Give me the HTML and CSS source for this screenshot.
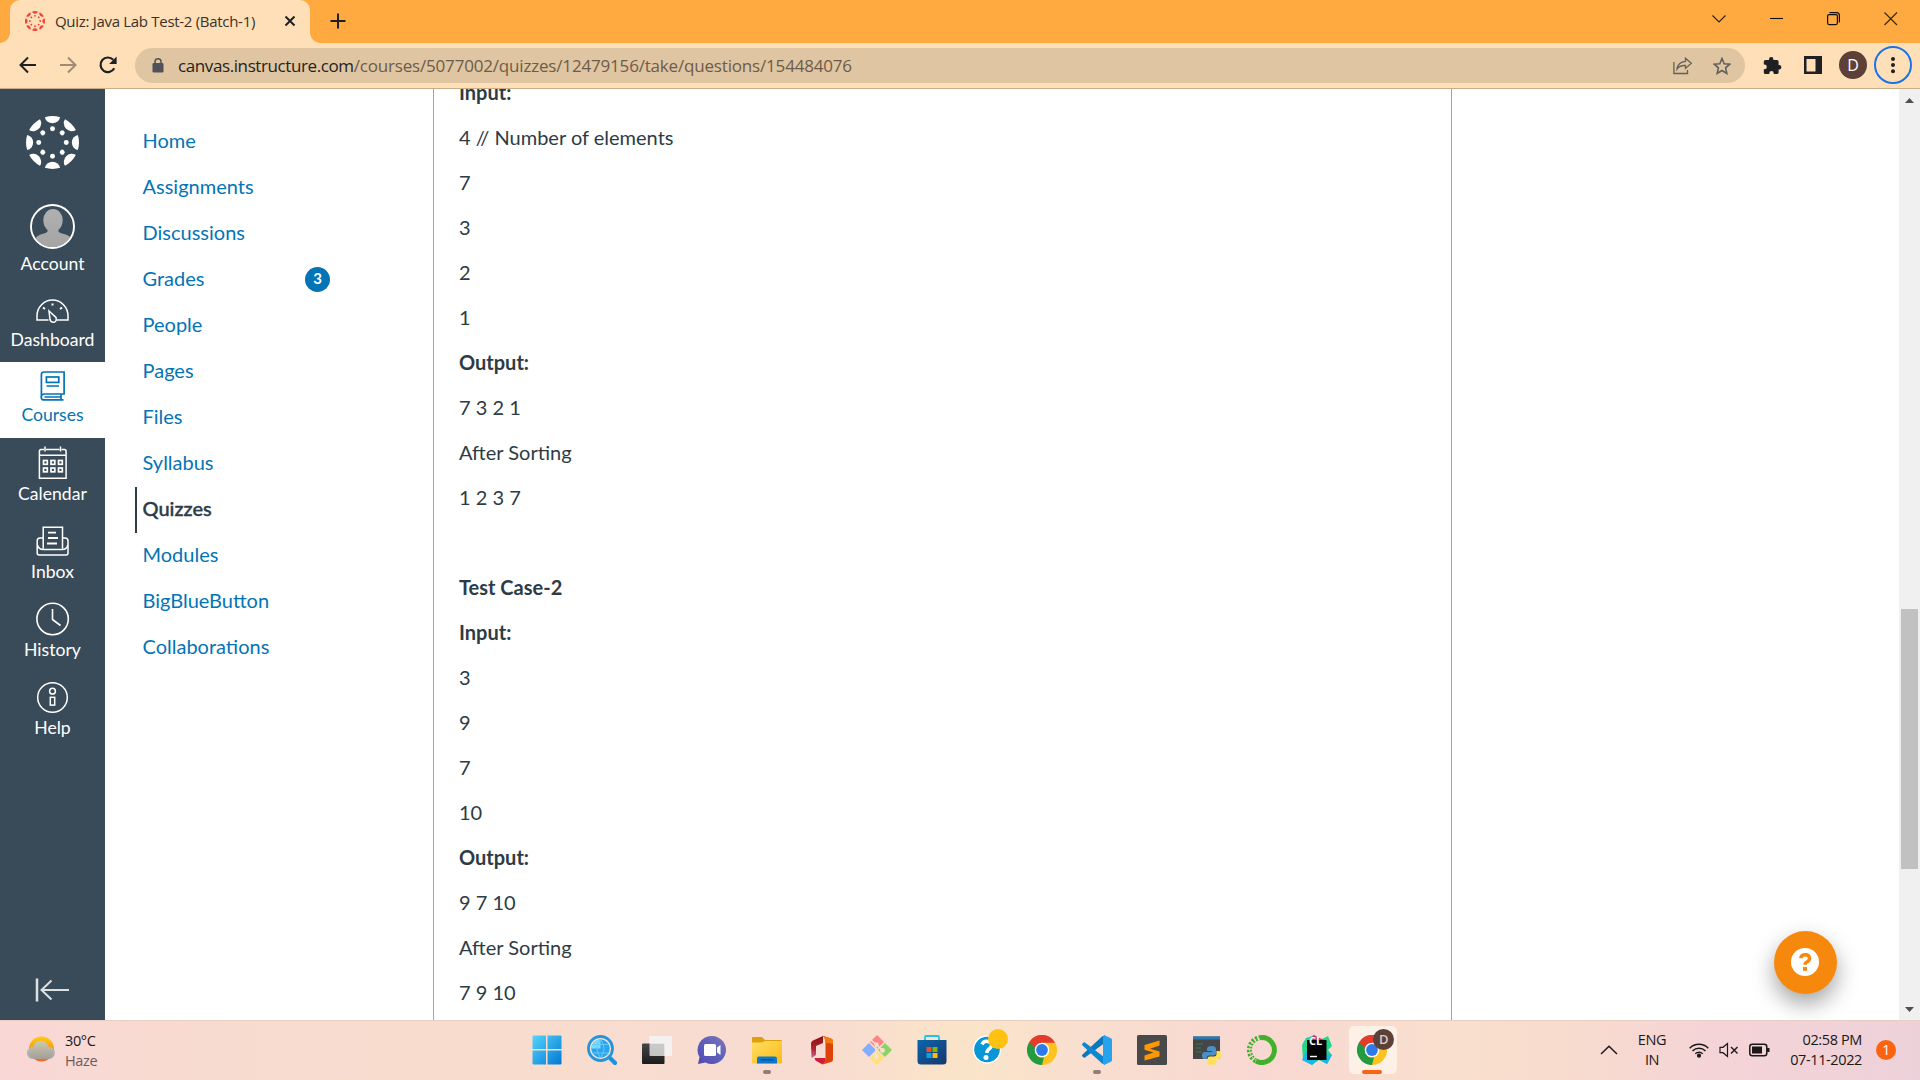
FILE: index.html
```html
<!DOCTYPE html>
<html lang="en">
<head>
<meta charset="utf-8">
<title>Quiz: Java Lab Test-2 (Batch-1)</title>
<link rel="stylesheet" href="styles.css">
</head>
<body>
<svg class="defs" width="0" height="0">
  <defs>
    <g id="petal"><path d="M57 3.500A80 80 0 0 1 103 3.500A23.300 21.500 0 0 1 57 3.500Z"/><circle cx="80" cy="38.500" r="7.500"/></g>
    <g id="canvas-logo">
      <use href="#petal"/><use href="#petal" transform="rotate(45 80 80)"/><use href="#petal" transform="rotate(90 80 80)"/><use href="#petal" transform="rotate(135 80 80)"/>
      <use href="#petal" transform="rotate(180 80 80)"/><use href="#petal" transform="rotate(225 80 80)"/><use href="#petal" transform="rotate(270 80 80)"/><use href="#petal" transform="rotate(315 80 80)"/>
    </g>
    <g id="chrome-logo">
      <path d="M15 15 2 7.500A15 15 0 0 1 28 7.500Z" fill="#e33b2e"/>
      <path d="M15 15 28 7.500A15 15 0 0 1 15 30Z" fill="#fcc31e"/>
      <path d="M15 15V30A15 15 0 0 1 2 7.500Z" fill="#249a41"/>
      <path d="M15 7.500H28L20 17Z" fill="#fcc31e"/>
      <path d="M2 7.500 8.500 18.700 15 14Z" fill="#249a41"/>
      <path d="M21.500 18.700 15 30 10 20Z" fill="#fcc31e"/>
      <path d="M8.500 18.800A7.500 7.500 0 0 0 17 22.300L15 30 8 28Z" fill="#249a41"/>
      <path d="M2 7.500Q8 0 15 0T28 7.500H15A7.500 7.500 0 0 0 7.900 12.900L3.500 9Z" fill="#e33b2e"/>
      <circle cx="15" cy="15" r="7.300" fill="#fff"/><circle cx="15" cy="15" r="5.900" fill="#2c7be9"/>
    </g>
    <linearGradient id="gWin" x1="0" y1="0" x2="1" y2="1"><stop offset="0" stop-color="#56d4fd"/><stop offset="1" stop-color="#0078d4"/></linearGradient>
    <linearGradient id="gTask" x1="0" y1="0" x2="0" y2="1"><stop offset="0" stop-color="#454545"/><stop offset="1" stop-color="#1c1c1c"/></linearGradient>
    <linearGradient id="gChat" x1="0" y1="1" x2="1" y2="0"><stop offset="0" stop-color="#4f4bb2"/><stop offset=".6" stop-color="#6264bb"/><stop offset="1" stop-color="#8676b2"/></linearGradient>
    <linearGradient id="gFolder" x1="0" y1="0" x2="1" y2="1"><stop offset="0" stop-color="#ffdf66"/><stop offset="1" stop-color="#fcb914"/></linearGradient>
    <linearGradient id="gStore" x1="0" y1="0" x2="1" y2="1"><stop offset="0" stop-color="#0a66ac"/><stop offset="1" stop-color="#18366c"/></linearGradient>
    <linearGradient id="gSun" x1="0" y1="0" x2="0" y2="1"><stop offset="0" stop-color="#ffcc0a"/><stop offset="1" stop-color="#f8631a"/></linearGradient>
    <linearGradient id="gCloud" x1="0" y1="0" x2="0" y2="1"><stop offset="0" stop-color="#c9ccc0"/><stop offset="1" stop-color="#9aa2a8"/></linearGradient>
    <linearGradient id="gAva" x1="0" y1="0" x2="0" y2="1"><stop offset="0" stop-color="#b0b0b0"/><stop offset="1" stop-color="#a4a4a4"/></linearGradient>
    <linearGradient id="gOff" x1="0" y1="0" x2="0" y2="1"><stop offset="0" stop-color="#8c0f14"/><stop offset=".6" stop-color="#b3242c"/><stop offset="1" stop-color="#c465a6"/></linearGradient>
  </defs>
</svg>
<div class="screen">
  <header class="tabstrip">
    <div class="tab">
      <svg class="favicon" viewBox="0 0 160 160" width="20" height="20" fill="#f2413a"><use href="#canvas-logo"/></svg>
      <span class="tab-title">Quiz: Java Lab Test-2 (Batch-1)</span>
      <svg class="tab-close" width="12" height="12" viewBox="0 0 12 12"><path d="M1.500 1.500 10.500 10.500M10.500 1.500 1.500 10.500" stroke="#1f2023" stroke-width="2"/></svg>
    </div>
    <svg class="newtab" width="16" height="16" viewBox="0 0 16 16"><path d="M8 .5V15.500M.5 8H15.500" stroke="#1f2023" stroke-width="2"/></svg>
    <div class="window-buttons">
      <svg width="58" height="36" viewBox="0 0 58 36" fill="none" stroke="#2a2013" stroke-width="1.100"><path d="M22.500 15.500 29 22 35.500 15.500"/></svg>
      <svg width="57" height="36" viewBox="0 0 57 36"><path d="M22 18.500H35" stroke="#111" stroke-width="1.100"/></svg>
      <svg width="57" height="36" viewBox="0 0 57 36" fill="none" stroke="#111" stroke-width="1.200"><rect x="22.600" y="14.600" width="9.800" height="10" rx="1.500"/><path d="M24.500 12.600H31.500Q34.400 12.600 34.400 15.500V22.500"/></svg>
      <svg width="58" height="36" viewBox="0 0 58 36"><path d="M22.500 12.500 35 25M35 12.500 22.500 25" stroke="#3a2a13" stroke-width="1.200"/></svg>
    </div>
  </header>
  <div class="toolbar">
    <div class="nav-buttons">
      <svg width="18" height="18" viewBox="0 0 18 18" fill="none" stroke="#1f2023" stroke-width="2"><path d="M17 9H2M9 1.500 1.500 9 9 16.500"/></svg>
      <svg width="18" height="18" viewBox="0 0 18 18" fill="none" stroke="#a08c74" stroke-width="2"><path d="M1 9H16M9 1.500 16.500 9 9 16.500"/></svg>
      <svg width="18" height="18" viewBox="0 0 18 18"><path d="M15.300 12.300A7.300 7.300 0 1 1 14.200 3.800" fill="none" stroke="#1f2023" stroke-width="2.200"/><path d="M17.600.5V8H10.100Z" fill="#1f2023"/></svg>
    </div>
    <div class="omnibox">
      <svg class="lock" width="12" height="15" viewBox="0 0 12 15"><rect x=".5" y="5" width="11" height="9.500" rx="1.300" fill="#505257"/><path d="M3 6V3.800A3 3 0 0 1 9 3.800V6" fill="none" stroke="#505257" stroke-width="1.500"/></svg>
      <span class="url"><span class="host">canvas.instructure.com</span>/courses/5077002/quizzes/12479156/take/questions/154484076</span>
      <svg class="share" width="20" height="18" viewBox="0 0 20 18" fill="none" stroke="#62605c" stroke-width="1.300"><path d="M.9 5V16.500H14.500V13"/><path d="M12.500 1.200 18.300 6.300 12.500 11.400V8.500C8.500 8.300 6 9.300 4 12 4.500 8 7.500 4.800 12.500 4.300Z"/></svg>
      <svg class="star" width="18" height="18" viewBox="0 0 18 18"><path d="M9 1.500 11.200 6.700 16.800 7.200 12.600 10.900 13.800 16.400 9 13.500 4.200 16.400 5.400 10.900 1.200 7.200 6.800 6.700Z" fill="none" stroke="#62605c" stroke-width="1.600"/></svg>
    </div>
    <div class="toolbar-actions">
      <svg class="puzzle" width="19" height="19" viewBox="0 0 19 19"><path d="M2.500 4H6V3.200A2.200 2.200 0 0 1 10.400 3.200V4H14A1.700 1.700 0 0 1 15.600 5.700V9H16.200A2.200 2.200 0 0 1 16.200 13.400H15.600V16.500A1.700 1.700 0 0 1 14 18.100H10.700V17.300A2.200 2.200 0 0 0 6.300 17.300V18.100H2.500A1.700 1.700 0 0 1 .8 16.500V13.200H1.500A2.300 2.300 0 0 0 1.500 8.600H.8V5.700A1.700 1.700 0 0 1 2.500 4Z" fill="#1f2023"/></svg>
      <svg class="panel" width="18" height="18" viewBox="0 0 18 18"><path fill-rule="evenodd" d="M0 0H18V18H0ZM2.500 3V15.500H11.500V3Z" fill="#1f2023"/></svg>
      <span class="profile">D</span>
      <span class="menu-ring"><svg width="6" height="18" viewBox="0 0 6 18" fill="#1f2023"><circle cx="3" cy="3" r="2"/><circle cx="3" cy="9" r="2"/><circle cx="3" cy="15.200" r="2"/></svg></span>
    </div>
  </div>

  <main class="page">
    <nav class="global-nav">
      <svg class="brand" viewBox="0 0 160 160" width="53" height="53" fill="#fff"><use href="#canvas-logo"/></svg>
      <a class="gitem account">
        <svg width="45" height="45" viewBox="0 0 45 45"><clipPath id="av"><circle cx="22.500" cy="22.500" r="20.500"/></clipPath><g clip-path="url(#av)" fill="url(#gAva)"><path d="M3 45V38Q5 31.500 14 29.500Q18.500 28.500 17.500 26Q13.300 22 13.300 16A9.700 11 0 0 1 32.700 16Q32.700 22 28.500 26Q27.500 28.500 32 29.500Q40 31 43 36V45Z"/></g><circle cx="22.500" cy="22.500" r="21.500" fill="none" stroke="#fff" stroke-width="1.900"/></svg>
        <span>Account</span></a>
      <a class="gitem dash">
        <svg width="35" height="36" viewBox="0.500 0 35 36" fill="none" stroke="#fff" stroke-width="1.500"><path d="M14 27H2.500V23A15.500 16 0 0 1 33.500 23V27H22"/><path d="M14.500 18 21.500 24.500Q22.500 28.500 19.500 29.200Q16.300 29.500 15.500 26.500Z"/><path d="M17 11.500H19M8.500 14.500 10.500 16M27.500 14.500 25.500 16" stroke-width="2"/></svg>
        <span>Dashboard</span></a>
      <a class="gitem active">
        <svg width="35" height="36" viewBox="0.500 0 35 36" fill="none" stroke="#0374b5" stroke-width="1.700"><path d="M6.900 29V6.500Q6.900 4 9.500 4H29.600V26H9.500Q6.500 26.500 6.700 29.300Q7 31.900 9.500 31.900H29"/><rect x="11.900" y="9" width="12.400" height="5.400"/><path d="M12 18H24.500M10 29H26M26.500 26V32"/></svg>
        <span>Courses</span></a>
      <a class="gitem low">
        <svg width="35" height="36" viewBox="0.500 0 35 36" fill="none" stroke="#fff" stroke-width="1.500"><path d="M9.500 4.500H6.500Q4.900 4.500 4.900 6.500V33.200H31.600V6.500Q31.600 4.500 30 4.500H27M11.500 4.500H25M5 10.300H31.500"/><path d="M10.500 1.500V6.500M26 1.500V6.500"/><g stroke-width="1.700"><rect x="9" y="15.500" width="3.800" height="3.800"/><rect x="16.500" y="15.500" width="3.800" height="3.800"/><rect x="24" y="15.500" width="3.800" height="3.800"/><rect x="9" y="23" width="3.800" height="3.800"/><rect x="16.500" y="23" width="3.800" height="3.800"/><rect x="24" y="23" width="3.800" height="3.800"/></g></svg>
        <span>Calendar</span></a>
      <a class="gitem low">
        <svg width="35" height="36" viewBox="0.500 0 35 36" fill="none" stroke="#fff" stroke-width="1.500"><path d="M8.500 15H5.500Q2.700 15 2.700 18V30Q2.700 32 4.700 32H31.500Q33.500 32 33.500 30V18Q33.500 15 30.500 15H28"/><path d="M8.700 25.500V4.200H28V25.500M3 22Q4 26.500 9 26.500H27.500Q32.500 26.500 33.300 22"/><path d="M13.500 9.700H21.500M13.500 15H23.500M12.500 20.500H22.500" stroke-width="1.800"/></svg>
        <span>Inbox</span></a>
      <a class="gitem low">
        <svg width="35" height="36" viewBox="0.500 0 35 36" fill="none" stroke="#fff" stroke-width="1.600"><circle cx="18.100" cy="18" r="15.700"/><path d="M18 8V18.500L26 24.500"/></svg>
        <span>History</span></a>
      <a class="gitem low">
        <svg width="35" height="36" viewBox="0.500 0 35 36" fill="none" stroke="#fff" stroke-width="1.500"><circle cx="18" cy="18.500" r="14.800"/><circle cx="18" cy="12.200" r="2.900"/><rect x="15.800" y="18.300" width="4.400" height="7.800"/></svg>
        <span>Help</span></a>
      <svg class="collapse" width="35" height="26" viewBox="0 0 35 26" fill="none" stroke="#dde1e4" stroke-width="2"><path d="M2 1.500V24.500" stroke-width="2.500"/><path d="M6 13H34M16.500 3.500 6.500 13 16.500 22.500"/></svg>
    </nav>
    <nav class="course-nav">
      <a>Home</a><a>Assignments</a><a>Discussions</a>
      <a>Grades<b class="count">3</b></a>
      <a>People</a><a>Pages</a><a>Files</a><a>Syllabus</a>
      <a class="current">Quizzes</a>
      <a>Modules</a><a>BigBlueButton</a><a>Collaborations</a>
    </nav>
    <section class="question">
      <p><strong>Input:</strong></p>
      <p>4 // Number of elements</p>
      <p>7</p><p>3</p><p>2</p><p>1</p>
      <p><strong>Output:</strong></p>
      <p>7 3 2 1</p>
      <p>After Sorting</p>
      <p>1 2 3 7</p>
      <p>&nbsp;</p>
      <p><strong>Test Case-2</strong></p>
      <p><strong>Input:</strong></p>
      <p>3</p><p>9</p><p>7</p><p>10</p>
      <p><strong>Output:</strong></p>
      <p>9 7 10</p>
      <p>After Sorting</p>
      <p>7 9 10</p>
    </section>
    <div class="scrollbar">
      <svg width="9" height="5" viewBox="0 0 9 5"><path d="M0 5 4.500 0 9 5Z" fill="#505050"/></svg>
      <div class="thumb"></div>
      <svg class="down" width="9" height="5" viewBox="0 0 9 5"><path d="M0 0H9L4.500 5Z" fill="#505050"/></svg>
    </div>
    <div class="help-fab"><svg width="28" height="28" viewBox="0 0 28 28"><circle cx="14" cy="14" r="14" fill="#fff"/><path d="M9.700 10.300Q10.300 6.700 14.300 6.700T18.600 10.300Q18.600 12.500 16.300 13.800Q14 15 14 16.800" fill="none" stroke="#f6890d" stroke-width="3.400"/><path d="M12 19H16V22.800H12Z" fill="#f6890d"/></svg></div>
  </main>

  <footer class="taskbar">
    <div class="weather">
      <svg width="30" height="28" viewBox="0 0 30 28"><circle cx="15.500" cy="14" r="12.500" fill="url(#gSun)"/><path d="M7 24A6 6 0 0 1 7 11.700A8 8 0 0 1 22.500 11.700A6 6 0 0 1 23 24Z" fill="url(#gCloud)" fill-opacity=".9"/></svg>
      <div class="wtext"><span>30°C</span><span class="muted">Haze</span></div>
    </div>
    <div class="apps">
      <div class="app"><svg width="30" height="30" viewBox="0 0 30 30" fill="url(#gWin)"><path d="M.5 1.500Q.5.500 1.500.5H14V14H.5ZM15.500.5H28.500Q29.500.5 29.500 1.500V14H15.500ZM.5 15.500H14V29.500H1.500Q.5 29.500.5 28.500ZM15.500 15.500H29.500V28.500Q29.500 29.500 28.500 29.500H15.500Z"/></svg></div>
      <div class="app"><svg width="30" height="30" viewBox="0 0 30 30"><path d="M21 21 28 28" stroke="#1e91dc" stroke-width="4.200" stroke-linecap="round"/><circle cx="13.500" cy="13.500" r="12" fill="#f6e5dc" stroke="#2495dd" stroke-width="2.800"/><circle cx="13.500" cy="13.500" r="9.300" fill="#2da5ee"/><path d="M4.200 13.500A9.300 9.300 0 0 1 13.500 4.200V13.500Z" fill="#77dcfb"/><path d="M13.500 4.200Q6.500 13.500 13.500 22.800Q20.500 13.500 13.500 4.200M5 9.500H22M5 18H22" fill="none" stroke="#65c9f7" stroke-width="1"/></svg></div>
      <div class="app"><svg width="30" height="30" viewBox="0 0 30 30"><rect x="0" y="8.500" width="22.500" height="20.500" rx="1" fill="url(#gTask)"/><rect x="7.500" y="1" width="22.500" height="20" rx="1" fill="#fff" fill-opacity=".72"/><path d="M22.500 21H29A1 1 0 0 0 30 20V2A1 1 0 0 0 29 1H8.500V8.500H22.500Z" fill="#f0f0f0" fill-opacity=".7"/></svg></div>
      <div class="app"><svg width="30" height="30" viewBox="0 0 30 30"><path d="M15 1A14 14 0 1 1 8.500 27.400L1 29 2.500 22A14 14 0 0 1 15 1Z" fill="url(#gChat)"/><rect x="7" y="9" width="12" height="12" rx="1.500" fill="#fff"/><path d="M20 12.500 23.500 10V20L20 17.500Z" fill="#fff"/></svg></div>
      <div class="app running"><svg width="30" height="30" viewBox="0 0 30 30"><path d="M0 3Q0 2 1 2H10L13 5H29Q30 5 30 6V12H0Z" fill="#dfa00c"/><path d="M0 7.500H10L13 6H30V27.500Q30 28.500 29 28.500H1Q0 28.500 0 27.500Z" fill="url(#gFolder)"/><path d="M5 28.500V23.500Q5 21.500 7 21.500H23Q25 21.500 25 23.500V28.500Z" fill="#0c78cf"/><path d="M8.500 24.800H21.500" stroke="#0b4f92" stroke-width="1.400"/></svg></div>
      <div class="app"><svg width="24" height="30" viewBox="0 0 24 30"><path d="M1 8.500Q1 6.500 3 5.500L13 1V8L6 11V20L1.500 23Z" fill="url(#gOff)"/><path d="M12.500.8 21 3.500Q23 4 23 6V24.500Q23 26.500 21 27L12.500 29.500Q15.500 27 15.500 24V7.500Q15.500 3 12.500.8Z" fill="#dd4307"/><path d="M12.500.8 21 3.500Q23 4 23 6V9L15.500 7.500Q15.500 3 12.500.8Z" fill="#f37b09"/><path d="M4.500 23H15.500Q15.500 27.500 12.500 29.500L5.500 25.500Z" fill="#cc1d3a"/></svg></div>
      <div class="app"><svg width="30" height="30" viewBox="0 0 30 30"><path d="M15 0 22 7 15 14 8 7Z" fill="#ff8585"/><path d="M23 8 30 15 23 22 16 15Z" fill="#8cd364"/><path d="M7 8 14 15 7 22 0 15Z" fill="#82aeff"/><path d="M15 16 22 23 15 30 8 23Z" fill="#ffe075"/><path d="M9 5 14 9.500V22M14.500 9.500 20 15" stroke="#fae0d0" stroke-width="1.600" fill="none"/><g fill="#fae0d0"><circle cx="14.500" cy="9.500" r="2.200"/><circle cx="20.500" cy="15.500" r="2.400"/><circle cx="14.500" cy="21.500" r="2.400"/></g></svg></div>
      <div class="app"><svg width="30" height="30" viewBox="0 0 30 30"><path d="M8 6V2Q8 1 9 1H21Q22 1 22 2V6" fill="none" stroke="#22c1f3" stroke-width="1.800"/><path d="M.5 5H29.500V26Q29.500 29.500 26 29.500H4Q.5 29.500.5 26Z" fill="url(#gStore)"/><path d="M9.500 12H14.500V17H9.500Z" fill="#f25022"/><path d="M15.500 12H20.500V17H15.500Z" fill="#7fba00"/><path d="M9.500 18H14.500V23H9.500Z" fill="#00a4ef"/><path d="M15.500 18H20.500V23H15.500Z" fill="#ffb900"/></svg></div>
      <div class="app"><svg class="tips" width="38" height="38" viewBox="0 0 38 38"><circle cx="16" cy="22.500" r="13.500" fill="#0796d6" stroke="#fff" stroke-width="1.400"/><path d="M11 17.500Q12.500 13.700 17 14.500Q21.500 15.600 20.500 19Q19.700 21 17.500 22.500Q16 23.500 15.800 26" fill="none" stroke="#fff" stroke-width="3.500"/><circle cx="15" cy="30.500" r="2.500" fill="#fff"/><circle cx="27" cy="12" r="10" fill="#ffc210"/></svg></div>
      <div class="app"><svg width="30" height="30" viewBox="0 0 30 30"><use href="#chrome-logo"/></svg></div>
      <div class="app running"><svg width="30" height="30" viewBox="0 0 30 30"><path d="M22 8.500 3 22.500Q2 23 1 22L.3 21.200Q-.3 20.200.5 19.500L20 1.500 23 .5V8Z" fill="#0b77bd"/><path d="M22 22 3 7.500Q2 7 1 8L.3 8.800Q-.3 9.800.5 10.500L20 28.500 23 29.500V22Z" fill="#0c88d3"/><path d="M22 0 29 3.200Q30 3.700 30 5V25Q30 26.300 29 26.800L22 30 21 28V2Z" fill="#26a3ec"/></svg></div>
      <div class="app"><svg width="30" height="30" viewBox="0 0 30 30"><rect width="30" height="30" rx="1.500" fill="#494949"/><path d="M22.500 5.500V10.500L13 13.700 22.500 16.500V21.500L7.500 25.500V20.500L16.500 17.500 7.500 14.800V10Z" fill="#ff9800"/></svg></div>
      <div class="app"><svg width="30" height="30" viewBox="0 0 30 30"><path d="M1 1.500H28V24H1Z" fill="#444648"/><path d="M1 1.500H28V4.500H1Z" fill="#257ab9"/><path d="M4 9H11M4 13H9M4 17H10" stroke="#3d7b45" stroke-width="1.200"/><path d="M15 14Q15 11 19.500 11T24 14V18Q24 20.500 21 20.500H17Q14.500 20.500 14.500 24H13Q10 24 10 20.500T13 17H20V16H15Z" fill="#4a90c8"/><path d="M24.500 16H26.500Q29.500 16 29.500 20T26.500 24H20V25H24.500V27.500Q24.500 30 19.800 30T15.500 27.500V23.500Q15.500 21.500 18 21.500H22Q24.500 21.500 24.500 19Z" fill="#ffe05a"/></svg></div>
      <div class="app"><svg width="30" height="30" viewBox="0 0 30 30" fill="none" stroke="#41b02b"><path d="M14 2.500A12.500 12.500 0 1 1 9 26" stroke-width="5"/><path d="M14 2.500A12.500 12.500 0 0 0 9 26" stroke-width="5" stroke-dasharray="2.200 1.500"/><path d="M13 4A11 11 0 0 0 9 25" stroke="#fadbcd" stroke-width="1" stroke-dasharray="2 2"/></svg></div>
      <div class="app clion"><svg width="30" height="30" viewBox="0 0 30 30"><path d="M0 10 4 3 13 0 18 5 26 1 30 11 26 15 30 20 25 29 17 25 10 30 1 25Z" fill="#21d789"/><path d="M10 4 11 0 22 5 14 8Z" fill="#ed1e79"/><path d="M0 25 5 15 15 25 10 30Z" fill="#16b9e8"/><path d="M18 25 25 19 30 20 25 29Z" fill="#16b9e8"/><rect x="5" y="5" width="19.500" height="20" fill="#050505"/><path d="M8 21.500H15" stroke="#fff" stroke-width="1.400"/></svg><span class="cl">CL</span></div>
      <div class="app focused"><svg width="30" height="30" viewBox="0 0 30 30"><use href="#chrome-logo"/></svg><span class="mini">D</span></div>
    </div>
    <div class="tray">
      <svg width="18" height="10" viewBox="0 0 18 10"><path d="M1 9 9 1.200 17 9" fill="none" stroke="#1b1819" stroke-width="1.500"/></svg>
      <div class="lang"><span>ENG</span><span>IN</span></div>
      <svg class="wifi" width="20" height="16" viewBox="0 0 20 16" fill="none" stroke="#1b1819" stroke-width="1.400"><path d="M.7 6.200A13 13 0 0 1 19.300 6.200M3.500 9A9.200 9.200 0 0 1 16.500 9M6.300 11.700A5.300 5.300 0 0 1 13.700 11.700"/><circle cx="10" cy="13.700" r="1.400" fill="#1b1819"/></svg>
      <svg class="sound" width="20" height="16" viewBox="0 0 20 16" fill="none" stroke="#1b1819" stroke-width="1.200"><path d="M1 5.300H4L8.500 1.500V14.500L4 10.700H1Z"/><path d="M12 5 18.500 11.500M18.500 5 12 11.500" stroke-width="1.400"/></svg>
      <svg class="battery" width="21" height="14" viewBox="0 0 21 14"><rect x=".8" y="1.300" width="17" height="11.400" rx="2.500" fill="none" stroke="#1b1819" stroke-width="1.500"/><rect x="3" y="3.500" width="10" height="7" fill="#1b1819"/><path d="M18 5H20.500V9H18Z" fill="#1b1819"/></svg>
      <div class="clock"><span>02:58 PM</span><span>07-11-2022</span></div>
      <span class="notif">1</span>
    </div>
  </footer>
</div>
</body>
</html>
```
FILE: styles.css
```css
* { box-sizing: border-box; }
body { margin: 0; width: 1920px; height: 1080px; overflow: hidden; background: #fff; font-family: "Open Sans", "Noto Sans", sans-serif; }
svg { display: block; flex: none; }
.defs { position: absolute; }
.screen { display: flex; flex-direction: column; height: 1080px; }

/* Browser chrome */
.tabstrip { height: 43px; flex: none; display: flex; background: #ffaa40; padding-left: 10px; }
.tab { position: relative; width: 300px; height: 43px; display: flex; align-items: center; background: #ffdfb7; border-radius: 10px 10px 0 0; padding: 0 14px 1px 15px; }
.tab::before, .tab::after { content: ""; position: absolute; bottom: 0; width: 10px; height: 10px; }
.tab::before { left: -10px; background: radial-gradient(circle at 0 0, transparent 9.5px, #ffdfb7 10px); }
.tab::after { right: -10px; background: radial-gradient(circle at 100% 0, transparent 9.5px, #ffdfb7 10px); }
.tab-title { margin: -1px 0 0 10px; font-size: 15px; line-height: 20px; letter-spacing: -0.3px; color: #3a322a; white-space: nowrap; flex: 1; }
.newtab { margin: 13px 0 0 20px; }
.window-buttons { margin-left: auto; display: flex; }
.toolbar { height: 46px; flex: none; display: flex; align-items: flex-start; background: #ffdfb7; border-bottom: 1px solid #c9ad8b; }
.nav-buttons { display: flex; gap: 22px; padding: 13px 0 0 19px; width: 135px; }
.omnibox { width: 1610px; height: 35px; margin-top: 5px; border-radius: 18px; background: #dfc5a1; display: flex; align-items: center; padding: 0 14px 0 16px; }
.url { margin-left: 14px; font-size: 17px; line-height: 24px; letter-spacing: -0.18px; color: #6c5c4a; flex: 1; white-space: nowrap; }
.host { color: #25221e; letter-spacing: -0.4px; }
.share { margin-right: 20px; }
.lock { margin-left: 1px; }
.toolbar-actions { display: flex; align-items: center; height: 44px; padding-left: 18px; }
.panel { margin-left: 22px; }
.profile { width: 28px; height: 28px; margin-left: 17px; border-radius: 50%; background: #5d4037; color: #fff; font-size: 16px; line-height: 28px; text-align: center; }
.menu-ring { width: 38px; height: 38px; margin-left: 7px; border: 2px solid #1a73e8; border-radius: 50%; display: flex; align-items: center; justify-content: center; }

/* Page */
.page { position: relative; height: 931px; flex: none; display: flex; overflow: hidden; font-family: Lato, sans-serif; color: #2d3b45; background: #fff; }
.global-nav { width: 105px; flex: none; background: #394b58; display: flex; flex-direction: column; align-items: center; color: #fff; }
.brand { margin: 27px 0 26px; }
.gitem { width: 105px; height: 76px; flex: none; padding-top: 6px; display: flex; flex-direction: column; align-items: center; font-size: 17.600px; line-height: 24px; }
.gitem span { margin-top: -1px; }
.gitem.account { height: 91px; padding-top: 9px; }
.gitem.account span { margin-top: 3px; }
.gitem.dash { padding-top: 7px; }
.gitem.low { height: 78px; padding-top: 7px; }
.gitem.low span { margin-top: 1px; }
.gitem.active { background: #fff; color: #0374b5; }
.collapse { margin: auto 0 17px 0; }
.course-nav { width: 328px; flex: none; padding: 30px 0 0 30px; display: flex; flex-direction: column; font-size: 20px; color: #0374b5; }
.course-nav a { height: 46px; line-height: 24px; width: 195px; padding: 0 0 4px 7.500px; display: flex; align-items: center; justify-content: space-between; }
.course-nav .current { color: #2d3b45; font-weight: 500; border-left: 2px solid #2d3b45; padding-left: 5.500px; -webkit-text-stroke: .4px #2d3b45; }
.count { width: 25px; height: 25px; margin-top: 2px; border-radius: 50%; background: #0374b5; color: #fff; font-size: 15px; line-height: 23px; text-align: center; }
.question { width: 1019px; flex: none; border: solid #a5a5a5; border-width: 0 1px; padding-left: 25px; }
.question p { margin: 0 0 15px; font-size: 20px; line-height: 30px; }
.question p:first-child { margin-top: -12px; }
.scrollbar { width: 21px; margin-left: auto; background: #f0f0f0; display: flex; flex-direction: column; align-items: center; padding: 9px 0 8px; }
.thumb { width: 17px; height: 260px; margin-top: 506px; background: #c1c1c1; }
.scrollbar .down { margin-top: auto; }
.help-fab { position: absolute; left: 1774px; top: 842px; width: 63px; height: 63px; border-radius: 50%; background: #f6890d; display: flex; align-items: center; justify-content: center; padding: 0 1px 1px 0; box-shadow: 0 10px 22px rgba(0,0,0,.36); }

/* Taskbar */
.taskbar { height: 60px; flex: none; display: flex; border-top: 1px solid #e9cdc2; background: linear-gradient(90deg, #f8d7d6 0, #f8dbd0 200px, #f8ddcf 380px, #f8ddcf 580px, #f8dbd2 800px, #fae4c8 960px, #f9dfcf 1080px, #f8d8d2 1260px, #f9dfce 1440px, #f8dccd 1560px, #f5d4d6 1700px, #edd1da 1920px); color: #1b1819; font-size: 14.500px; line-height: 20px; letter-spacing: -0.38px; }
.weather { width: 520px; display: flex; padding: 14px 0 0 25.500px; gap: 9.500px; }
.wtext { display: flex; flex-direction: column; margin-top: -4px; }
.muted { color: #6b5c5c; }
.apps { display: flex; }
.app { width: 55px; height: 59px; display: flex; align-items: center; justify-content: center; position: relative; padding: 0 1px 1px 0; }
.running::after, .focused::after { content: ""; position: absolute; bottom: 6px; width: 8px; height: 4px; border-radius: 2px; background: #8f7f77; }
.tips { margin: -8px 0 0 5px; }
.focused::before { content: ""; position: absolute; left: 4px; top: 5px; width: 48px; height: 48px; border-radius: 5px; background: #fdf0e6; }
.focused svg { position: relative; }
.focused::after { width: 20px; background: #fa6410; }
.mini { position: absolute; left: 28px; top: 8px; width: 21px; height: 21px; border-radius: 50%; background: #5d4037; color: #d9cdc9; font-size: 13px; font-weight: 600; line-height: 21px; text-align: center; }
.cl { position: absolute; left: 19px; top: 13px; font: 700 11px/14px "Open Sans", sans-serif; letter-spacing: 0; color: #fff; }
.tray { margin-left: auto; display: flex; align-items: center; padding: 0 24px 1px 0; }
.lang { display: flex; flex-direction: column; align-items: center; width: 34px; margin: 0 20px 0 17px; }
.sound { margin-left: 10px; }
.battery { margin-left: 10px; }
.clock { display: flex; flex-direction: column; align-items: flex-end; margin: -1px 0 0 18px; width: 74px; white-space: nowrap; }
.notif { width: 20px; height: 20px; margin-left: 14px; border-radius: 50%; background: #fa6410; color: #fff; font-size: 14px; text-align: center; }
```
